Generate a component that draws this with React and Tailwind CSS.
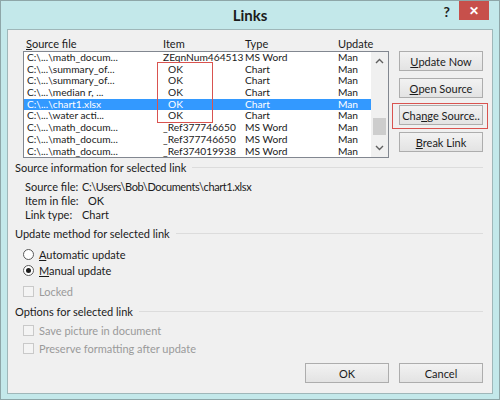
import React from "react";

const rows = [
  { src: "C:\\...\\math_docum...", item: "ZEqnNum464513", type: "MS Word", upd: "Man" },
  { src: "C:\\...\\summary_of...", item: "OK", type: "Chart", upd: "Man", ok: true },
  { src: "C:\\...\\summary_of...", item: "OK", type: "Chart", upd: "Man", ok: true },
  { src: "C:\\...\\median r, ...", item: "OK", type: "Chart", upd: "Man", ok: true },
  { src: "C:\\...\\chart1.xlsx", item: "OK", type: "Chart", upd: "Man", ok: true, sel: true },
  { src: "C:\\...\\water acti...", item: "OK", type: "Chart", upd: "Man", ok: true },
  { src: "C:\\...\\math_docum...", item: "_Ref377746650", type: "MS Word", upd: "Man" },
  { src: "C:\\...\\math_docum...", item: "_Ref377746650", type: "MS Word", upd: "Man" },
  { src: "C:\\...\\math_docum...", item: "_Ref374019938", type: "MS Word", upd: "Man" },
];

function Btn({ children, className = "" }) {
  return (
    <button
      type="button"
      className={
        "h-[20px] w-[84px] border border-[#adadad] bg-gradient-to-b from-[#f2f2f2] to-[#e3e3e3] text-[11px] text-[#1b1b1b] leading-none flex items-center justify-center whitespace-nowrap overflow-hidden " +
        className
      }
    >
      {children}
    </button>
  );
}

function Section({ children }) {
  return (
    <div className="flex items-center gap-[6px] h-[16px] text-[#1b1b1b]">
      <span className="whitespace-nowrap">{children}</span>
      <div className="flex-1 h-px bg-[#dcdcdc]" />
    </div>
  );
}

function Check({ label }) {
  return (
    <div className="flex items-center h-[18px] gap-[5px] text-[#9a9a9a]">
      <span className="w-[11px] h-[11px] border border-[#c9c9c9] bg-[#f4f4f4]" />
      <span>{label}</span>
    </div>
  );
}

function Radio({ checked, children }) {
  return (
    <div className="flex items-center h-[16px] gap-[5px] text-[#1b1b1b]">
      <span className="w-[11px] h-[11px] rounded-full border border-[#5a5a5a] bg-white flex items-center justify-center">
        {checked && <span className="w-[5px] h-[5px] rounded-full bg-[#1b1b1b]" />}
      </span>
      <span>{children}</span>
    </div>
  );
}

export default function App() {
  return (
    <div
      className="w-[500px] h-[400px] bg-[#c3e8ea] border border-[#8ea6a8] flex flex-col text-[11px] leading-none"
      style={{ fontFamily: 'Lato, "Noto Sans", sans-serif' }}
    >
      {/* title bar */}
      <div className="h-[28px] flex items-start relative">
        <div className="flex-1 text-center font-bold text-[15px] text-[#1b1b1b] pt-[7px]">Links</div>
        <div className="absolute right-[10px] top-0 flex items-start">
          <span className="font-bold text-[14px] text-[#222] mr-[9px] mt-[4px]">?</span>
          <span className="w-[30px] h-[19px] bg-[#c7504b] text-white flex items-center justify-center text-[12px] font-bold">
            ✕
          </span>
        </div>
      </div>

      {/* content */}
      <div className="flex-1 mx-[6px] mb-[5px] bg-[#f0f0f0] border border-[#9fb7b9] relative flex flex-col pl-[7px] pr-[9px] pt-[6px]">
        <div className="flex gap-[10px]">
          <div className="flex flex-col pl-[8px]">
            {/* headers */}
            <div className="flex h-[15px] items-center text-[#1b1b1b] whitespace-nowrap">
              <span className="w-[140px] pl-[3px]">
                <span className="underline">S</span>ource file
              </span>
              <span className="w-[82px]">Item</span>
              <span className="w-[93px]">Type</span>
              <span>Update</span>
            </div>
            {/* list */}
            <div className="w-[366px] h-[107px] border border-[#828790] bg-white flex">
              <div className="flex-1 flex flex-col text-[10.2px]">
                {rows.map((r, i) => (
                  <div
                    key={i}
                    className={
                      "flex h-[11.7px] leading-[11.7px] items-center whitespace-nowrap " +
                      (r.sel ? "bg-[#3399ff] text-white" : "text-[#1b1b1b]")
                    }
                  >
                    <span className="w-[139px] pl-[3px]">{r.src}</span>
                    <span className={"w-[82px] " + (r.ok ? "pl-[5px]" : "")}>{r.item}</span>
                    <span className="w-[93px]">{r.type}</span>
                    <span>{r.upd}</span>
                  </div>
                ))}
              </div>
              {/* scrollbar */}
              <div className="w-[17px] bg-[#f0f0f0] flex flex-col items-center">
                <svg width="9" height="16" viewBox="0 0 9 16" className="mt-[1px]">
                  <path d="M1 10 L4.5 6.5 L8 10" fill="none" stroke="#606060" strokeWidth="1.4" />
                </svg>
                <div className="flex-1" />
                <div className="w-[13px] h-[17px] bg-[#cdcdcd] mb-[6px]" />
                <svg width="9" height="14" viewBox="0 0 9 14" className="mb-[2px]">
                  <path d="M1 5 L4.5 8.5 L8 5" fill="none" stroke="#606060" strokeWidth="1.4" />
                </svg>
              </div>
            </div>
          </div>

          {/* buttons */}
          <div className="flex flex-col gap-[7px] pt-[15px]">
            <Btn>
              <span className="underline">U</span>pdate Now
            </Btn>
            <Btn>
              <span className="underline">O</span>pen Source
            </Btn>
            <Btn>
              Cha<span className="underline">n</span>ge Source..
            </Btn>
            <Btn>
              <span className="underline">B</span>reak Link
            </Btn>
          </div>
        </div>

        {/* source info */}
        <div className="mt-[1px]">
          <Section>Source information for selected link</Section>
          <div className="pl-[10px] pt-[4px] flex flex-col text-[#1b1b1b]">
            <div className="flex h-[14px] items-center">
              <span className="w-[57px]">Source file:</span>
              <span className="tracking-[-0.4px]">C:\Users\Bob\Documents\chart1.xlsx</span>
            </div>
            <div className="flex h-[14px] items-center">
              <span className="w-[63px]">Item in file:</span>
              <span>OK</span>
            </div>
            <div className="flex h-[14px] items-center">
              <span className="w-[57px]">Link type:</span>
              <span>Chart</span>
            </div>
          </div>
        </div>

        <div className="mt-[4px]">
          <Section>Update method for selected link</Section>
          <div className="pl-[8px] pt-[5px] flex flex-col">
            <Radio>
              <span className="underline">A</span>utomatic update
            </Radio>
            <Radio checked>
              <span className="underline">M</span>anual update
            </Radio>
            <div className="mt-[4px]">
              <Check label="Locked" />
            </div>
          </div>
        </div>

        <div className="mt-[3px]">
          <Section>Options for selected link</Section>
          <div className="pl-[8px] pt-[2px] flex flex-col">
            <Check label="Save picture in document" />
            <Check label="Preserve formatting after update" />
          </div>
        </div>

        <div className="flex-1" />
        <div className="flex justify-end gap-[10px] pb-[10px]">
          <Btn className="w-[66px] h-[19px] border-[#3c7fb1]">OK</Btn>
          <Btn className="w-[66px] h-[19px]">Cancel</Btn>
        </div>

        {/* annotation boxes */}
        <div className="absolute left-[149px] top-[32px] w-[56px] h-[61px] border border-[#d9534f] pointer-events-none" />
        <div className="absolute left-[384px] top-[73px] w-[96px] h-[26px] border border-[#d9534f] pointer-events-none" />
      </div>
    </div>
  );
}
